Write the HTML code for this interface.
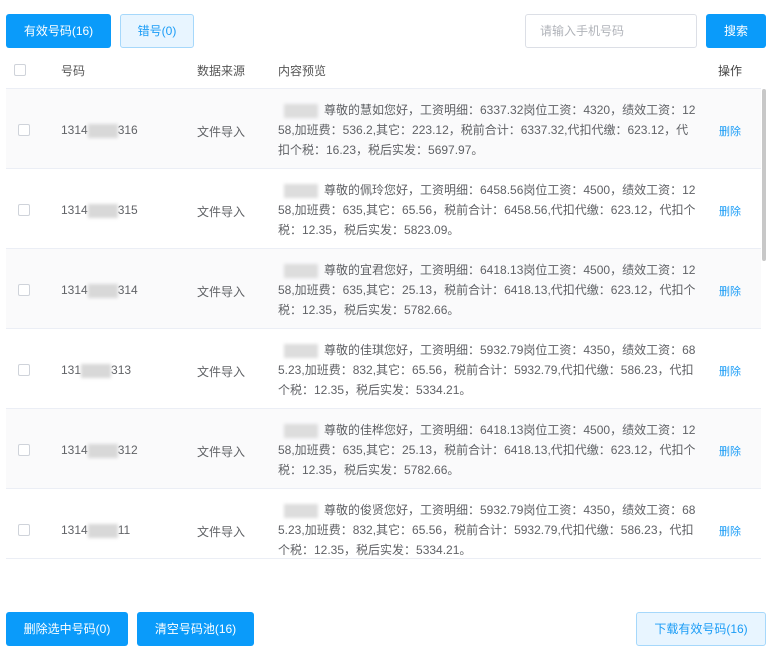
<!DOCTYPE html>
<html><head><meta charset="utf-8"><style>
*{margin:0;padding:0;box-sizing:border-box}
body{width:780px;height:657px;background:#fff;font-family:"Liberation Sans","Noto Sans CJK SC",sans-serif;font-size:12px;color:#606266;position:relative;overflow:hidden}
.abs{position:absolute}
.btn{position:absolute;border-radius:3px;text-align:center;font-size:12px;line-height:34px;height:34px}
.pri{background:#0a9bfa;color:#fff}
.lt{background:#e8f5ff;border:1px solid #a6d8fb;color:#1a9cf6;line-height:32px}
.cb{position:absolute;width:12px;height:12px;border:1px solid #cfd3da;border-radius:2px;background:#fff}
.row{position:absolute;left:6px;width:755px;height:80px;border-bottom:1px solid #ebeef5}
.g{background:#fafafb}
.num{position:absolute;left:55px;top:34px;font-size:12px;color:#606266}
.blur{display:inline-block;width:30px;height:14px;background:#d8d8d8;vertical-align:middle;filter:blur(1.5px)}
.src{position:absolute;left:191px;top:34px}
.txt{position:absolute;left:272px;top:11px;width:420px;line-height:20px;font-size:12px;word-break:break-all}
.del{position:absolute;left:713px;top:34px;color:#1a9cf6;font-size:11px}
.bp{display:inline-block;width:34px;height:14px;background:#ddd;vertical-align:middle;filter:blur(1.5px);margin-left:6px;margin-right:6px}
</style></head><body>
<div class="btn pri" style="left:6px;top:14px;width:105px">有效号码(16)</div>
<div class="btn lt" style="left:120px;top:14px;width:74px">错号(0)</div>
<div class="abs" style="left:525px;top:14px;width:172px;height:34px;border:1px solid #dcdfe6;border-radius:3px;color:#b0b3b9;line-height:32px;padding-left:14px">请输入手机号码</div>
<div class="btn pri" style="left:706px;top:14px;width:60px">搜索</div>

<div class="cb" style="left:14px;top:64px"></div>
<div class="abs" style="left:61px;top:62px;color:#555">号码</div>
<div class="abs" style="left:197px;top:62px;color:#555">数据来源</div>
<div class="abs" style="left:278px;top:62px;color:#555">内容预览</div>
<div class="abs" style="left:718px;top:62px;color:#444">操作</div>
<div class="abs" style="left:6px;top:88px;width:755px;height:1px;background:#ebeef5"></div>

<div class="row g" style="top:89px"><div class="cb" style="left:12px;top:35px"></div><div class="num">1314<span class="blur"></span>316</div><div class="src">文件导入</div><div class="txt"><span class="bp"></span>尊敬的慧如您好，工资明细：6337.32岗位工资：4320，绩效工资：1258,加班费：536.2,其它：223.12，税前合计：6337.32,代扣代缴：623.12，代扣个税：16.23，税后实发：5697.97。</div><div class="del">删除</div></div>
<div class="row" style="top:169px"><div class="cb" style="left:12px;top:35px"></div><div class="num">1314<span class="blur"></span>315</div><div class="src">文件导入</div><div class="txt"><span class="bp"></span>尊敬的佩玲您好，工资明细：6458.56岗位工资：4500，绩效工资：1258,加班费：635,其它：65.56，税前合计：6458.56,代扣代缴：623.12，代扣个税：12.35，税后实发：5823.09。</div><div class="del">删除</div></div>
<div class="row g" style="top:249px"><div class="cb" style="left:12px;top:35px"></div><div class="num">1314<span class="blur"></span>314</div><div class="src">文件导入</div><div class="txt"><span class="bp"></span>尊敬的宜君您好，工资明细：6418.13岗位工资：4500，绩效工资：1258,加班费：635,其它：25.13，税前合计：6418.13,代扣代缴：623.12，代扣个税：12.35，税后实发：5782.66。</div><div class="del">删除</div></div>
<div class="row" style="top:329px"><div class="cb" style="left:12px;top:35px"></div><div class="num">131<span class="blur"></span>313</div><div class="src">文件导入</div><div class="txt"><span class="bp"></span>尊敬的佳琪您好，工资明细：5932.79岗位工资：4350，绩效工资：685.23,加班费：832,其它：65.56，税前合计：5932.79,代扣代缴：586.23，代扣个税：12.35，税后实发：5334.21。</div><div class="del">删除</div></div>
<div class="row g" style="top:409px"><div class="cb" style="left:12px;top:35px"></div><div class="num">1314<span class="blur"></span>312</div><div class="src">文件导入</div><div class="txt"><span class="bp"></span>尊敬的佳桦您好，工资明细：6418.13岗位工资：4500，绩效工资：1258,加班费：635,其它：25.13，税前合计：6418.13,代扣代缴：623.12，代扣个税：12.35，税后实发：5782.66。</div><div class="del">删除</div></div>
<div class="row" style="top:489px;height:70px"><div class="cb" style="left:12px;top:35px"></div><div class="num">1314<span class="blur"></span>11</div><div class="src">文件导入</div><div class="txt"><span class="bp"></span>尊敬的俊贤您好，工资明细：5932.79岗位工资：4350，绩效工资：685.23,加班费：832,其它：65.56，税前合计：5932.79,代扣代缴：586.23，代扣个税：12.35，税后实发：5334.21。</div><div class="del">删除</div></div>

<div class="abs" style="left:762px;top:89px;width:4px;height:172px;background:#c8c8c8;border-radius:2px"></div>

<div class="btn pri" style="left:6px;top:612px;width:122px">删除选中号码(0)</div>
<div class="btn pri" style="left:137px;top:612px;width:117px">清空号码池(16)</div>
<div class="btn lt" style="left:636px;top:612px;width:130px">下载有效号码(16)</div>
</body></html>
